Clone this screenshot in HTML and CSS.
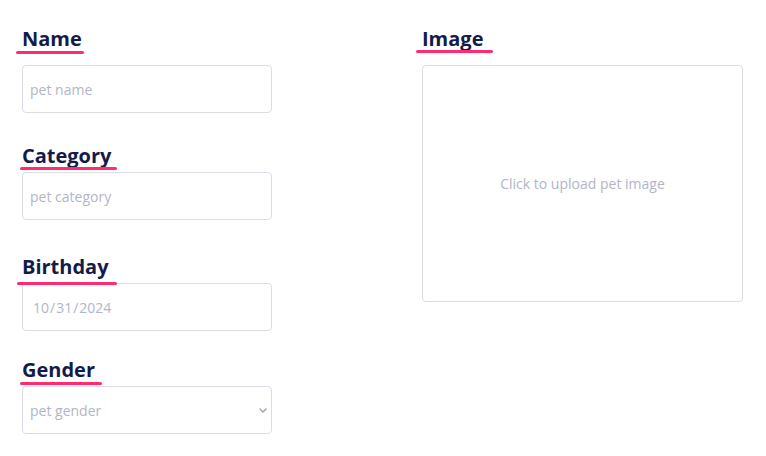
FILE: index.html
```html
<!DOCTYPE html>
<html lang="en">
<head>
<meta charset="utf-8">
<title>Pet form</title>
<link rel="stylesheet" href="styles.css">
</head>
<body>
<form class="pet-form">
  <div class="col">
    <div class="field field--name">
      <label class="label label--name" for="name">Name</label>
      <input class="control" id="name" type="text" placeholder="pet name">
    </div>
    <div class="field field--category">
      <label class="label label--category" for="category">Category</label>
      <input class="control" id="category" type="text" placeholder="pet category">
    </div>
    <div class="field field--birthday">
      <label class="label label--birthday" for="birthday">Birthday</label>
      <input class="control control--date" id="birthday" type="date" value="2024-10-31">
    </div>
    <div class="field field--gender">
      <label class="label label--gender" for="gender">Gender</label>
      <div class="select-wrap">
        <select class="control control--select" id="gender">
          <option value="">pet gender</option>
          <option value="m">male</option>
          <option value="f">female</option>
        </select>
        <svg class="chevron" width="8" height="5" viewBox="0 0 8 5" aria-hidden="true">
          <path d="M1 1 L4 4 L7 1" fill="none" stroke="#9a9cab" stroke-width="1.3" stroke-linecap="round" stroke-linejoin="round"/>
        </svg>
      </div>
    </div>
  </div>
  <div class="col">
    <div class="field field--image">
      <label class="label label--image" for="image">Image</label>
      <label class="upload" for="image">Click to upload pet image</label>
      <input class="file" id="image" type="file" accept="image/*">
    </div>
  </div>
</form>
</body>
</html>
```
FILE: styles.css
```css
* { box-sizing: border-box; }

html, body {
  margin: 0;
  background: #ffffff;
  font-family: "Open Sans", "Noto Sans", sans-serif;
}

.pet-form {
  display: grid;
  grid-template-columns: 250px 321px;
  column-gap: 150px;
  padding: 27px 0 0 22px;
}

.col {
  display: flex;
  flex-direction: column;
}

.field {
  display: flex;
  flex-direction: column;
  align-items: flex-start;
}

.field--category { margin-top: 31px; }
.field--birthday { margin-top: 35px; }
.field--gender { margin-top: 27px; }

.label {
  position: relative;
  font-size: 20px;
  font-weight: 700;
  line-height: 24px;
  color: #131b4b;
  margin-bottom: 4px;
}

.label::after {
  content: "";
  position: absolute;
  top: 24px;
  height: 3px;
  border-radius: 2px;
  background: #ff2d6f;
}

.label--name { margin-bottom: 14px; }
.label--name::after { left: -6px; width: 68px; top: 24px; }
.label--category::after { left: -2px; width: 97px; top: 23px; }
.label--birthday::after { left: -5px; width: 100px; top: 27px; }
.label--gender::after { left: -2px; width: 82px; top: 24px; }
.label--image { margin-bottom: 14px; }
.label--image::after { left: -6px; width: 77px; top: 23px; }

.control {
  width: 250px;
  height: 48px;
  border: 1px solid #dcdce5;
  border-radius: 4px;
  padding: 0 7px;
  font-family: "Open Sans", "Noto Sans", sans-serif;
  font-size: 14px;
  color: #b3b5c6;
  background: #ffffff;
  outline: none;
}

.control::placeholder { color: #b3b5c6; }

.control--date { padding-left: 9px; }
.control--date::-webkit-calendar-picker-indicator { display: none; }
.control--date::-webkit-datetime-edit { color: #b3b5c6; }

.select-wrap {
  position: relative;
  display: flex;
}

.control--select {
  appearance: none;
  -webkit-appearance: none;
  padding-left: 7px;
}

.chevron {
  position: absolute;
  right: 5px;
  top: 22px;
  pointer-events: none;
}

.upload {
  display: flex;
  align-items: center;
  justify-content: center;
  width: 321px;
  height: 237px;
  border: 1px solid #dcdce5;
  border-radius: 4px;
  font-size: 14px;
  color: #b3b5c6;
  cursor: pointer;
}

.file { display: none; }
```
